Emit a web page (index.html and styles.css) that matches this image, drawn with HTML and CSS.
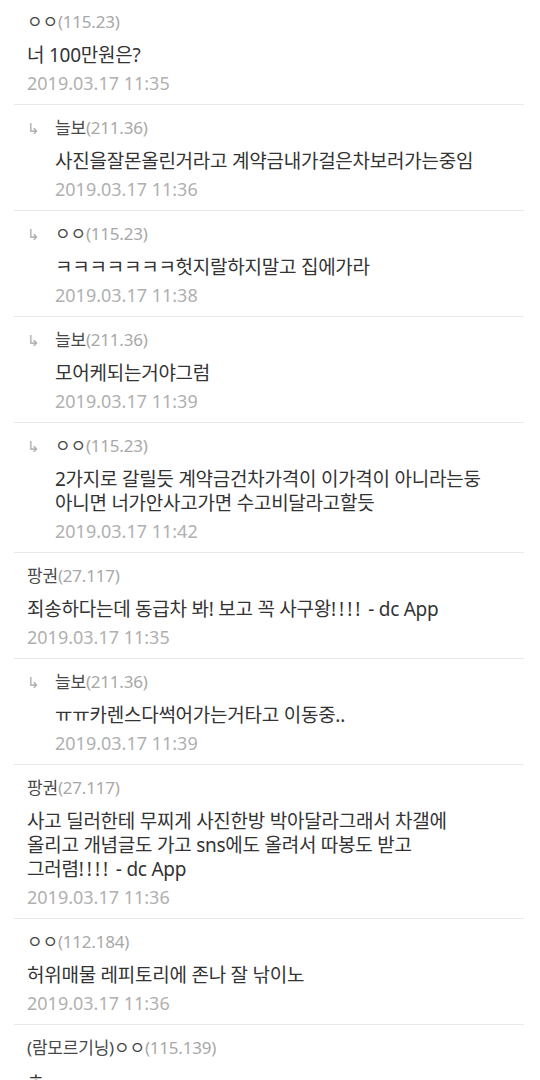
FILE: index.html
```html
<!DOCTYPE html>
<html lang="ko">
<head>
    <meta charset="UTF-8">
    <meta name="viewport" content="width=device-width, initial-scale=1.0">
    <title>댓글</title>
    <link rel="stylesheet" href="styles.css">
</head>
<body>
    <ul class="comments">
        <li class="comment">
            <div class="writer">ㅇㅇ<span class="ip">(115.23)</span></div>
            <p class="text">너 100만원은?</p>
            <div class="date">2019.03.17 11:35</div>
        </li>
        <li class="comment reply">
            <div class="writer">늘보<span class="ip">(211.36)</span></div>
            <p class="text">사진을잘몬올린거라고 계약금내가걸은차보러가는중임</p>
            <div class="date">2019.03.17 11:36</div>
        </li>
        <li class="comment reply">
            <div class="writer">ㅇㅇ<span class="ip">(115.23)</span></div>
            <p class="text">ㅋㅋㅋㅋㅋㅋㅋ헛지랄하지말고 집에가라</p>
            <div class="date">2019.03.17 11:38</div>
        </li>
        <li class="comment reply">
            <div class="writer">늘보<span class="ip">(211.36)</span></div>
            <p class="text">모어케되는거야그럼</p>
            <div class="date">2019.03.17 11:39</div>
        </li>
        <li class="comment reply">
            <div class="writer">ㅇㅇ<span class="ip">(115.23)</span></div>
            <p class="text">2가지로 갈릴듯 계약금건차가격이 이가격이 아니라는둥<br>아니면 너가안사고가면 수고비달라고할듯</p>
            <div class="date">2019.03.17 11:42</div>
        </li>
        <li class="comment">
            <div class="writer">팡권<span class="ip">(27.117)</span></div>
            <p class="text">죄송하다는데 동급차 봐! 보고 꼭 사구왕<span class="bang">!!!!</span> - dc App</p>
            <div class="date">2019.03.17 11:35</div>
        </li>
        <li class="comment reply">
            <div class="writer">늘보<span class="ip">(211.36)</span></div>
            <p class="text">ㅠㅠ카렌스다썩어가는거타고 이동중..</p>
            <div class="date">2019.03.17 11:39</div>
        </li>
        <li class="comment">
            <div class="writer">팡권<span class="ip">(27.117)</span></div>
            <p class="text">사고 딜러한테 무찌게 사진한방 박아달라그래서 차갤에<br>올리고 개념글도 가고 sns에도 올려서 따봉도 받고<br>그러렴<span class="bang">!!!!</span> - dc App</p>
            <div class="date">2019.03.17 11:36</div>
        </li>
        <li class="comment">
            <div class="writer">ㅇㅇ<span class="ip">(112.184)</span></div>
            <p class="text">허위매물 레피토리에 존나 잘 낚이노</p>
            <div class="date">2019.03.17 11:36</div>
        </li>
        <li class="comment">
            <div class="writer">(람모르기닝)ㅇㅇ<span class="ip">(115.139)</span></div>
            <p class="text">ㅎ</p>
        </li>
    </ul>
</body>
</html>
```

FILE: styles.css
```css
/* 댓글 목록 */
body {
    margin: 0;
    background-color: #fff;
    font-family: "Noto Sans", "Noto Sans CJK KR", sans-serif;
    overflow: hidden;
}

.comments {
    list-style: none;
    margin: 0;
    padding: 0 16px 0 14px;
}

.comment {
    padding: 11px 0 8px 13px;
    border-top: 1px solid #e9e9e9;
}

.comment:first-child {
    padding-top: 10px;
    border-top: none;
}

.reply {
    padding-left: 41px;
    position: relative;
}

.reply::before {
    content: "↳";
    position: absolute;
    left: 13px;
    top: 13px;
    font-size: 15px;
    color: #aaa;
}

.writer {
    font-size: 17px;
    line-height: 24px;
    color: #484848;
    letter-spacing: -0.2px;
}

.ip {
    color: #a8a8a8;
}

.text {
    margin: 9px 0 0;
    font-size: 19px;
    line-height: 24px;
    color: #333;
    letter-spacing: -0.25px;
}

.bang {
    letter-spacing: 3px;
}

.date {
    margin-top: 3px;
    font-size: 18px;
    line-height: 26px;
    color: #b0b0b0;
}
```
